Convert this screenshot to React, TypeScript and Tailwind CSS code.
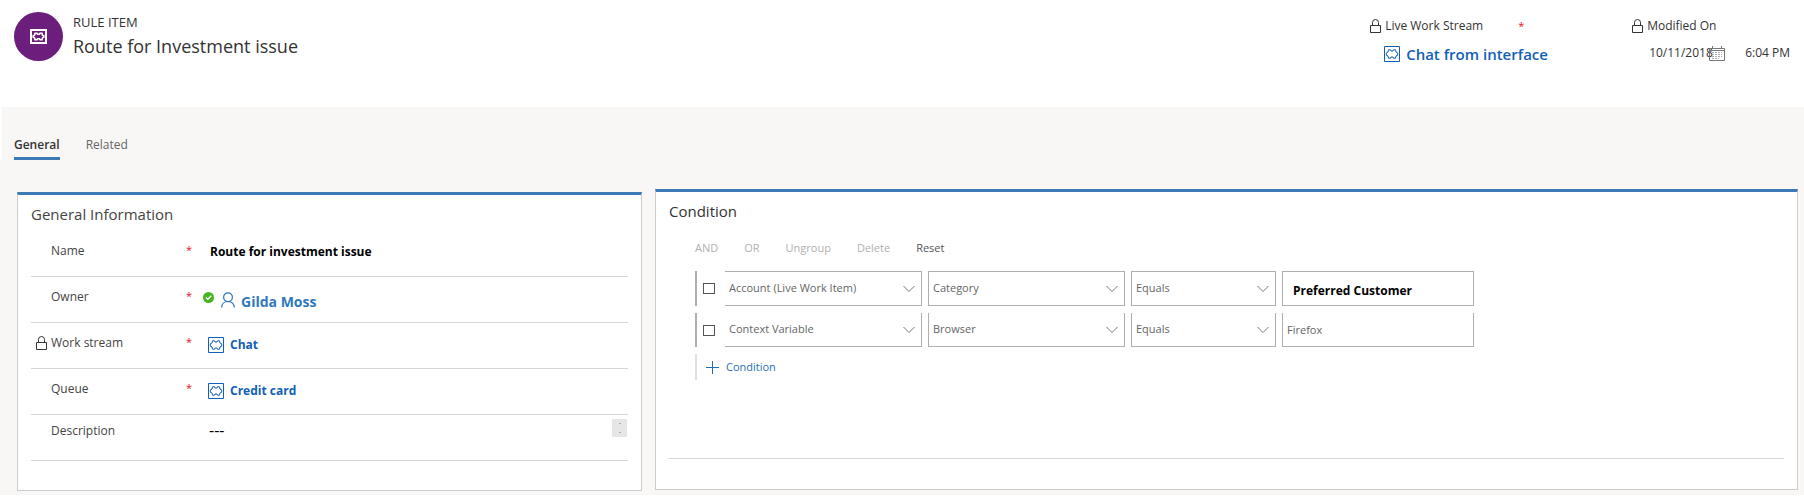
import type { ReactNode } from 'react';

function LockIcon() {
  return (
    <svg className="h-[14px] w-[11px] shrink-0" viewBox="0 0 11 14" fill="none" stroke="#333" aria-hidden="true">
      <path d="M0.5 6.5h10v7h-10z" />
      <path d="M2.5 6.5V3.5a3 3 0 0 1 6 0v3" />
    </svg>
  );
}

const puzzlePath =
  'M4.500 3.800h2l.5 1.200h2l.5-1.200h2l.5 2.200 1.700.8v2.400l-1.700.8-.5 2.200h-2L9 11H7l-.5 1.200h-2L4 10l-1.700-.8V6.800L4 6z';

function PuzzleIcon() {
  return (
    <svg className="h-4 w-4 shrink-0" viewBox="0 0 16 16" fill="none" stroke="#1160b7" aria-hidden="true">
      <path d="M0.5 0.5h15v15h-15z" />
      <path d={puzzlePath} strokeLinejoin="round" />
    </svg>
  );
}

function Star() {
  return <span className="block text-[11px] leading-[16px] text-[#e81123]">*</span>;
}

function Chevron() {
  return (
    <svg className="pointer-events-none absolute top-[13px] right-[6px] h-[8px] w-[12px]" viewBox="0 0 12 8" fill="none" stroke="#777" aria-hidden="true">
      <path d="M0.5 1 6 6.5 11.5 1" />
    </svg>
  );
}

function Row({ label, locked, required, labelTop = 'pt-[10px]', children }: { label: string; locked?: boolean; required?: boolean; labelTop?: string; children: ReactNode }) {
  return (
    <div className="flex h-[46px] items-start border-b border-[#d6d6d6]">
      <div className={'flex w-[155px] shrink-0 items-center ' + labelTop}>
        <span className="flex w-5 justify-center">{locked && <LockIcon />}</span>
        <span className="flex-1 text-[12px] leading-[20px] text-[#444]">{label}</span>
      </div>
      <div className="w-[20px] shrink-0 pt-[11px]">{required && <Star />}</div>
      {children}
    </div>
  );
}

function Picker({ label, value, box }: { label: string; value: string; box: string }) {
  return (
    <div className={'relative ' + box}>
      <select aria-label={label} defaultValue={value} className="h-full w-full appearance-none bg-transparent pl-1 text-[11px] text-[#666] outline-none">
        <option>{value}</option>
      </select>
      <Chevron />
    </div>
  );
}

function ConditionRow({ entity, field, first, children }: { entity: string; field: string; first?: boolean; children: ReactNode }) {
  const edge = first ? 'border-t ' : '';
  return (
    <div className={'flex border-l-2 border-[#b0b0b0] ' + (first ? 'h-[35px]' : 'h-[34px]')}>
      <div className="flex w-7 items-center pl-[6px]">
        <input type="checkbox" aria-label={'Select ' + entity} className="h-[11px] w-[12px] appearance-none border border-[#555] bg-white" />
      </div>
      <div className="grid flex-1 grid-cols-[197px_197px_145px_192px] gap-x-[6px]">
        <Picker label="Entity" value={entity} box={edge + 'border-r border-b border-[#b0b0b0]'} />
        <Picker label="Attribute" value={field} box={edge + 'border-x border-b border-[#b0b0b0]'} />
        <Picker label="Operator" value="Equals" box={edge + 'border-x border-b border-[#b0b0b0]'} />
        <div className={edge + 'border-x border-b border-[#b0b0b0]'}>{children}</div>
      </div>
    </div>
  );
}

export default function App() {
  return (
    <div className="bg-white font-['Open_Sans','Noto_Sans',sans-serif] text-[#333]">
      <header className="flex h-[107px] items-start justify-between pr-[14px] pl-[14px]">
        <div className="flex pt-3">
          <div className="flex h-[49px] w-[49px] items-center justify-center rounded-full bg-[#6b1e7c]">
            <svg className="h-[15px] w-[17px]" viewBox="0 0 17 15" fill="none" stroke="#fff" aria-hidden="true">
              <path d="M1 1h15v13H1z" strokeWidth="2" />
              <path d="M5 4.200h2l.5 1h2l.5-1h2l.5 2 1.300.5v1.600l-1.300.5-.5 2h-2l-.5-1h-2l-.5 1H5l-.5-2-1.300-.5V6.700l1.300-.5z" strokeWidth="1.600" />
            </svg>
          </div>
          <div className="pl-[10px]">
            <p className="text-[13px] leading-[20px]">RULE ITEM</p>
            <h1 className="text-[18px] leading-[28px]">Route for Investment issue</h1>
          </div>
        </div>
        <div className="flex pt-4">
          <div className="w-[262px]">
            <div className="flex h-5 items-center">
              <LockIcon />
              <span className="w-[137px] pl-1 text-[12px] leading-[20px]">Live Work Stream</span>
              <Star />
            </div>
            <div className="flex h-9 items-center gap-[6px] pl-[14px]">
              <PuzzleIcon />
              <a href="#stream" className="text-[15px] leading-[20px] font-semibold text-[#1160b7]">Chat from interface</a>
            </div>
          </div>
          <div>
            <div className="flex h-5 items-center">
              <LockIcon />
              <span className="pl-1 text-[12px] leading-[20px]">Modified On</span>
            </div>
            <div className="flex h-[34px] items-center pl-[17px] text-[12px]">
              <span className="w-[60px] whitespace-nowrap">10/11/2018</span>
              <svg className="h-[15px] w-4" viewBox="0 0 16 15" fill="none" stroke="#777" aria-hidden="true">
                <path d="M0.5 2.500h15v12H0.500zM0.500 4.500h15M3.500 0v3M12.500 0v3" />
                <path d="M3 6.500h10M3 8.500h10M3 10.500h10M3 12.500h7" strokeDasharray="2 1" stroke="#aaa" />
              </svg>
              <span className="pl-5 whitespace-nowrap">6:04 PM</span>
            </div>
          </div>
        </div>
      </header>

      <main className="bg-[#f8f7f5] pb-1">
        <nav className="flex h-[53px] items-end gap-[26px] border-l-2 border-white pl-3 text-[12px]">
          <a href="#general" className="border-b-[3px] border-[#3b79b7] pb-[2px] leading-[20px] font-semibold">General</a>
          <a href="#related" className="border-b-[3px] border-transparent pb-[2px] leading-[20px] text-[#666]">Related</a>
        </nav>

        <div className="flex items-end gap-[13px] pt-[29px] pr-[6px] pl-[17px]">
          <section className="h-[299px] w-[625px] shrink-0 border border-t-[3px] border-[#ccc] border-t-[#3b79b7] bg-white px-[13px]">
            <h2 className="pt-[7px] text-[15px] leading-[24px] text-[#444]">General Information</h2>
            <div className="pt-[5px]">
              <Row label="Name" required>
                <span className="pt-[11px] pl-1 text-[12px] leading-[20px] font-bold text-black">Route for investment issue</span>
              </Row>
              <Row label="Owner" required>
                <span className="flex items-start pt-[15px]">
                  <svg className="-ml-[3px] h-[11px] w-[11px]" viewBox="0 0 11 11" fill="none" aria-hidden="true">
                    <circle cx="5.500" cy="5.500" r="5.500" fill="#43b51f" />
                    <path d="M3 5.500 4.800 7.300 8.200 3.900" stroke="#fff" strokeWidth="1.500" />
                  </svg>
                  <svg className="ml-[7px] h-4 w-[14px]" viewBox="0 0 14 16" fill="none" stroke="#2b70bd" strokeWidth="1.200" aria-hidden="true">
                    <circle cx="7" cy="5.200" r="4.400" />
                    <path d="M0.700 15.500c0-3.500 2.500-6 6.300-6s6.300 2.500 6.300 6" />
                  </svg>
                  <a href="#owner" className="pl-[6px] text-[14px] leading-[20px] font-bold text-[#2f78bd]">Gilda Moss</a>
                </span>
              </Row>
              <Row label="Work stream" locked required>
                <span className="flex items-center gap-[6px] pt-[12px] pl-[2px]">
                  <PuzzleIcon />
                  <a href="#workstream" className="text-[12px] leading-[20px] font-bold text-[#1160b7]">Chat</a>
                </span>
              </Row>
              <Row label="Queue" required>
                <span className="flex items-center gap-[6px] pt-[12px] pl-[2px]">
                  <PuzzleIcon />
                  <a href="#queue" className="text-[12px] leading-[20px] font-bold text-[#1160b7]">Credit card</a>
                </span>
              </Row>
              <Row label="Description" labelTop="pt-[6px]">
                <span className="flex-1 pt-[5px] pl-[3px] text-[16px] leading-[20px] text-black">---</span>
                <button aria-label="Expand description" className="mt-1 mr-px flex h-[18px] w-[15px] flex-col items-center justify-between bg-[#e6e6e6] py-1">
                  <span className="h-px w-[2px] bg-[#aaa]" />
                  <span className="h-px w-[2px] bg-[#aaa]" />
                </button>
              </Row>
            </div>
          </section>

          <section className="mb-px h-[301px] min-w-0 flex-1 border border-t-[3px] border-[#ccc] border-t-[#3b79b7] bg-white px-[13px]">
            <h2 className="pt-[7px] text-[15px] leading-[24px]">Condition</h2>
            <div className="h-[236px] border-b border-[#d6d6d6] pl-[26px]">
              <div className="flex gap-[26px] pt-[15px] text-[11px] leading-[20px] text-[#b0b0b0]">
                <button disabled>AND</button>
                <button disabled>OR</button>
                <button disabled>Ungroup</button>
                <button disabled>Delete</button>
                <button className="text-[#555]">Reset</button>
              </div>
              <div className="flex flex-col gap-[7px] pt-[13px]">
                <ConditionRow entity="Account (Live Work Item)" field="Category" first>
                  <input aria-label="Value" defaultValue="Preferred Customer" className="h-full w-full bg-transparent pt-[3px] pl-[10px] text-[12px] font-bold text-black outline-none" />
                </ConditionRow>
                <ConditionRow entity="Context Variable" field="Browser">
                  <input aria-label="Value" defaultValue="Firefox" className="h-full w-full bg-transparent pl-1 text-[11px] text-[#666] outline-none" />
                </ConditionRow>
                <div className="flex h-[26px] items-center border-l-2 border-[#e0e0e0] pl-[9px]">
                  <button className="flex items-center gap-[7px] text-[11px] text-[#1f6fb5]">
                    <svg className="h-[13px] w-[13px]" viewBox="0 0 13 13" stroke="currentColor" aria-hidden="true">
                      <path d="M6.500 0v13M0 6.500h13" />
                    </svg>
                    Condition
                  </button>
                </div>
              </div>
            </div>
          </section>
        </div>
      </main>
    </div>
  );
}
